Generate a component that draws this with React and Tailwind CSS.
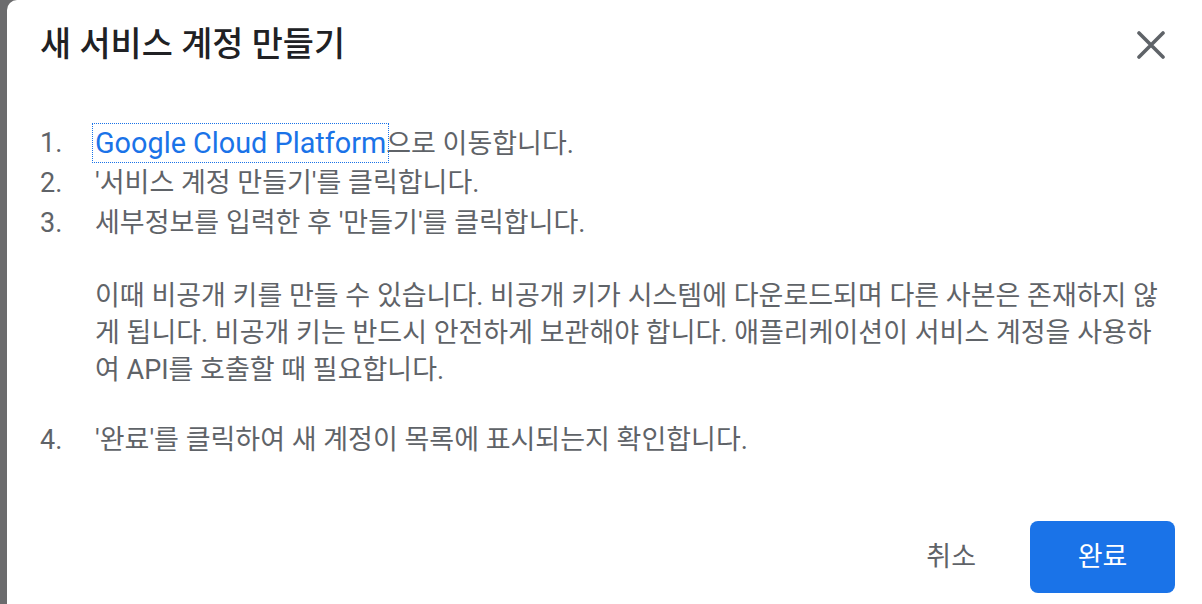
import React from "react";

const steps = [
  { n: "1.", text: null },
  { n: "2.", text: "'서비스 계정 만들기'를 클릭합니다." },
  { n: "3.", text: "세부정보를 입력한 후 '만들기'를 클릭합니다." },
];

const CreateServiceAccountDialog = () => {
  return (
    <div
      className="flex h-[604px] w-[1202px] overflow-hidden bg-[#6b6b6d]"
      style={{ fontFamily: "Roboto, 'Noto Sans CJK KR', sans-serif" }}
    >
      {/* backdrop edge */}
      <div className="w-[7px] shrink-0" />

      {/* Dialog */}
      <div className="flex flex-1 flex-col rounded-tl-[10px] bg-white pl-[33px] pr-[27px]">
        {/* Header */}
        <div className="flex items-center justify-between pt-[27px]">
          <h1 className="text-[33.8px] leading-[36px] font-medium text-[#202124]">
            새 서비스 계정 만들기
          </h1>
          <button className="mr-[10px] flex h-[28px] w-[28px] items-center justify-center text-[#5f6368]">
            <svg width="28" height="28" viewBox="0 0 28 28" fill="none">
              <path
                d="M2 2L26 26M26 2L2 26"
                stroke="currentColor"
                strokeWidth="3.6"
                strokeLinecap="round"
              />
            </svg>
          </button>
        </div>

        {/* Steps */}
        <div className="mt-[60px] text-[27px] text-[#5f6368]">
          {steps.map((s) => (
            <div key={s.n} className="flex h-[40px] items-center leading-[40px]">
              <span className="w-[55px] shrink-0">{s.n}</span>
              {s.text ? (
                <span>{s.text}</span>
              ) : (
                <span>
                  <a
                    href="#"
                    className="text-[28.8px] text-[#1a73e8] outline outline-1 outline-dotted outline-[#1a73e8] outline-offset-[2px]"
                  >
                    Google Cloud Platform
                  </a>
                  으로 이동합니다.
                </span>
              )}
            </div>
          ))}

          <p className="mt-[35px] pl-[55px] leading-[37px]">
            이때 비공개 키를 만들 수 있습니다. 비공개 키가 시스템에 다운로드되며 다른 사본은 존재하지 않게 됩니다. 비공개 키는 반드시 안전하게 보관해야 합니다. 애플리케이션이 서비스 계정을 사용하여 API를 호출할 때 필요합니다.
          </p>

          <div className="mt-[31px] flex h-[40px] items-center leading-[40px]">
            <span className="w-[55px] shrink-0">4.</span>
            <span>'완료'를 클릭하여 새 계정이 목록에 표시되는지 확인합니다.</span>
          </div>
        </div>

        {/* Actions */}
        <div className="mt-[61px] flex items-center justify-end">
          <button className="mr-[54px] text-[27px] text-[#5f6368]">취소</button>
          <button className="h-[72px] w-[145px] rounded-[8px] bg-[#1a73e8] text-[27px] text-white">
            완료
          </button>
        </div>
      </div>
    </div>
  );
};

export default function App() {
  return <CreateServiceAccountDialog />;
}
